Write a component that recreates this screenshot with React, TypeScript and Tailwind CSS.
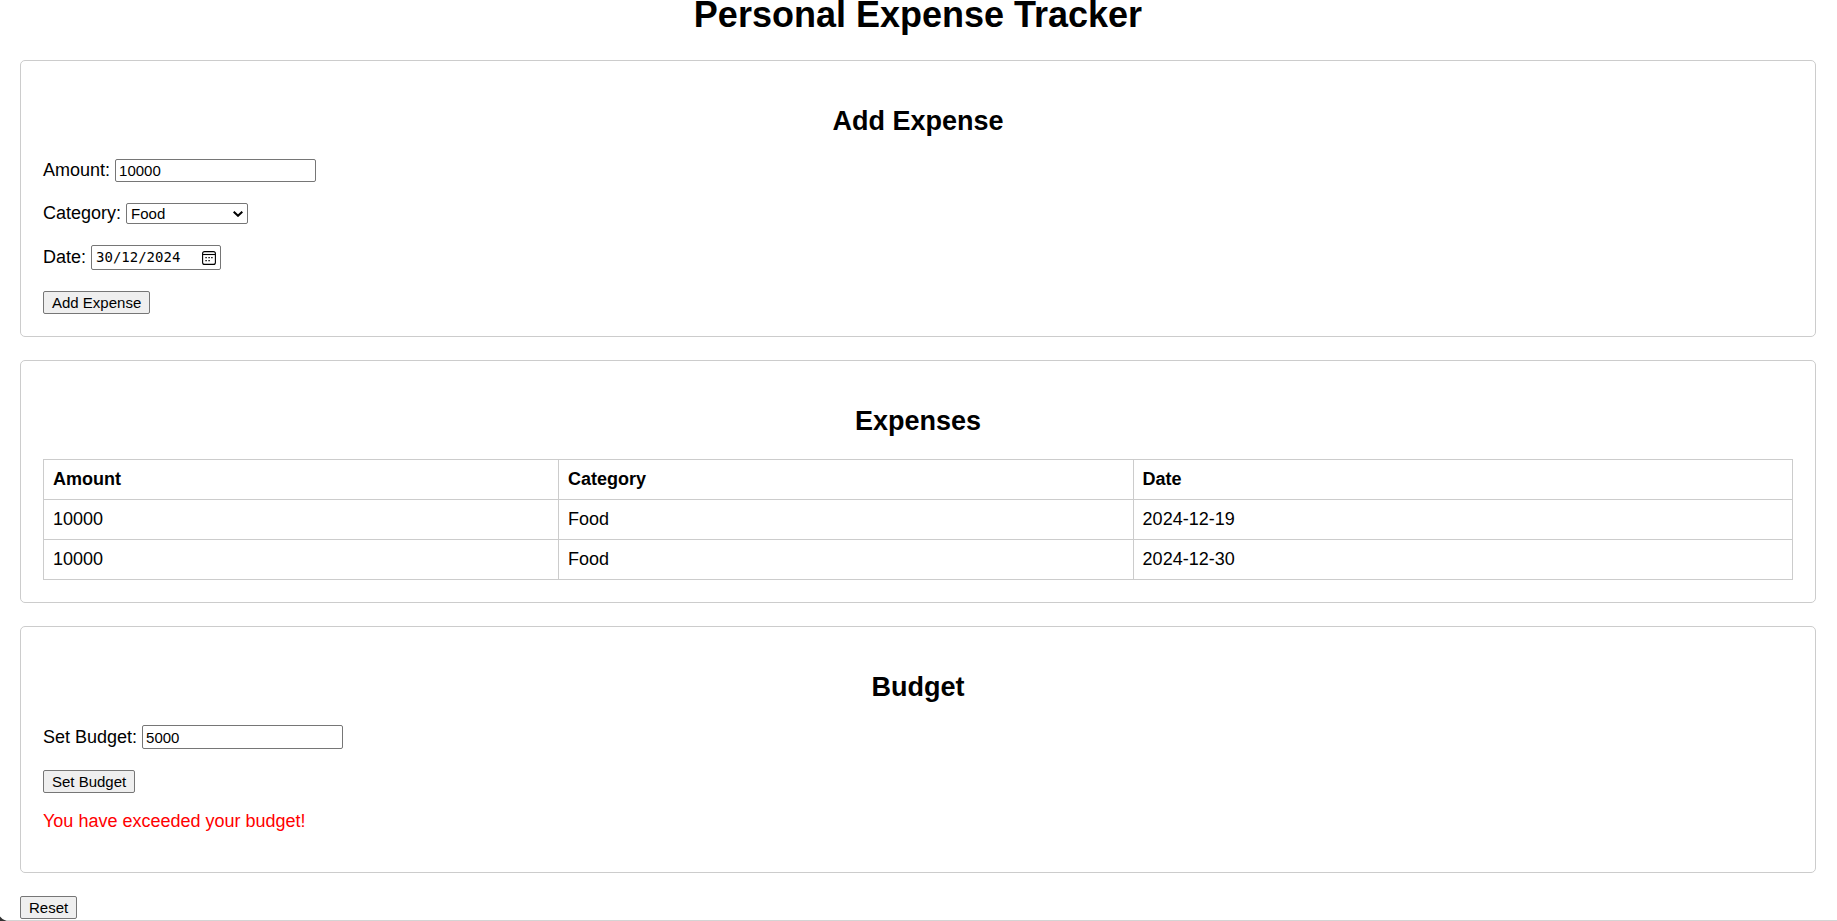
import { useState } from "react";
import type { ReactNode } from "react";

type Expense = { amount: string; category: string; date: string };

const initialExpenses: Expense[] = [
  { amount: "10000", category: "Food", date: "2024-12-19" },
  { amount: "10000", category: "Food", date: "2024-12-30" },
];

const categories = ["Food", "Transport", "Entertainment", "Other"];

const fieldClass =
  "rounded-[2px] border border-[#767676] bg-white px-[3px] text-[15px] leading-[17px] outline-none";
const buttonClass =
  "h-[23px] rounded-[2px] border border-[#767676] bg-[#efefef] px-2 text-[15px] leading-[17px]";
const cellClass = "h-10 border border-[#cccccc] px-[9px] text-left";

function Card({ title, children }: { title: string; children: ReactNode }) {
  return (
    <section className="mb-[23px] rounded-[5px] border border-[#cccccc] p-[22px]">
      <h2 className="py-[23px] text-center text-[27px] leading-[30px] font-bold">{title}</h2>
      {children}
    </section>
  );
}

function CalendarIcon() {
  return (
    <svg width="14" height="14" viewBox="0 0 14 14" fill="none" stroke="currentColor" aria-hidden="true">
      <rect x="0.6" y="0.6" width="12.8" height="12.8" rx="2" strokeWidth="1.1" />
      <path d="M1 3.5h12" strokeWidth="1.1" />
      <path
        d="M6.4 6.6h1.4M9.2 6.6h1.4M3.4 6.6h1.4M3.4 9.6h1.4M6.4 9.6h1.4"
        strokeWidth="1.4"
      />
    </svg>
  );
}

export default function App() {
  const [amount, setAmount] = useState("10000");
  const [category, setCategory] = useState("Food");
  const [date, setDate] = useState("30/12/2024");
  const [budget, setBudget] = useState("5000");
  const [limit, setLimit] = useState(5000);
  const [expenses, setExpenses] = useState(initialExpenses);

  const total = expenses.reduce((sum, e) => sum + Number(e.amount), 0);

  return (
    <div className="relative min-h-screen border-b border-[#d4d4d4] bg-white pr-[21px] pl-5 font-['Liberation_Sans',Arial,sans-serif] text-[18px] leading-[21px] text-black">
      <h1 className="pb-[30px] text-center text-[36px] leading-[30px] font-bold">Personal Expense Tracker</h1>

      <Card title="Add Expense">
        <form
          className="flex flex-col items-start gap-[21px]"
          onSubmit={(e) => {
            e.preventDefault();
            setExpenses([...expenses, { amount, category, date: date.split("/").reverse().join("-") }]);
          }}
        >
          <div className="flex items-center gap-[5px]">
            <label htmlFor="amount">Amount:</label>
            <input
              id="amount"
              className={`${fieldClass} h-[23px] w-[201px]`}
              value={amount}
              onChange={(e) => setAmount(e.target.value)}
            />
          </div>
          <div className="flex items-center gap-[5px]">
            <label htmlFor="category">Category:</label>
            <div className="grid items-center">
              <select
                id="category"
                className="col-start-1 row-start-1 h-[21px] w-[122px] appearance-none rounded-[2px] border border-[#767676] bg-white px-1 text-[15px] leading-[17px]"
                value={category}
                onChange={(e) => setCategory(e.target.value)}
              >
                {categories.map((c) => (
                  <option key={c}>{c}</option>
                ))}
              </select>
              <svg
                className="pointer-events-none col-start-1 row-start-1 mr-[5px] justify-self-end"
                width="10"
                height="6"
                viewBox="0 0 10 6"
                fill="none"
                stroke="currentColor"
                strokeWidth="2"
                aria-hidden="true"
              >
                <path d="M0.7 0.7 5 4.8 9.3 0.7" />
              </svg>
            </div>
          </div>
          <div className="flex items-center gap-[5px]">
            <label htmlFor="date">Date:</label>
            <div className="flex h-[25px] w-[130px] items-center justify-between rounded-[2px] border border-[#767676] px-1">
              <input
                id="date"
                className="w-[92px] font-['DejaVu_Sans_Mono',monospace] text-[14px] leading-[17px] outline-none"
                value={date}
                onChange={(e) => setDate(e.target.value)}
              />
              <button type="button" aria-label="Open calendar">
                <CalendarIcon />
              </button>
            </div>
          </div>
          <button type="submit" className={buttonClass}>
            Add Expense
          </button>
        </form>
      </Card>

      <Card title="Expenses">
        <table className="w-full border-collapse">
          <thead>
            <tr>
              <th className={`${cellClass} w-[29.45%]`}>Amount</th>
              <th className={`${cellClass} w-[32.85%]`}>Category</th>
              <th className={cellClass}>Date</th>
            </tr>
          </thead>
          <tbody>
            {expenses.map((e, i) => (
              <tr key={i}>
                <td className={cellClass}>{e.amount}</td>
                <td className={cellClass}>{e.category}</td>
                <td className={cellClass}>{e.date}</td>
              </tr>
            ))}
          </tbody>
        </table>
      </Card>

      <Card title="Budget">
        <form
          className="flex flex-col items-start gap-[21px]"
          onSubmit={(e) => {
            e.preventDefault();
            setLimit(Number(budget));
          }}
        >
          <div className="flex items-center gap-[5px]">
            <label htmlFor="budget">Set Budget:</label>
            <input
              id="budget"
              className={`${fieldClass} h-6 w-[201px]`}
              value={budget}
              onChange={(e) => setBudget(e.target.value)}
            />
          </div>
          <button type="submit" className={buttonClass}>
            Set Budget
          </button>
        </form>
        <p className="min-h-[57px] pt-[18px] text-[#ff0000]">
          {total > limit ? "You have exceeded your budget!" : ""}
        </p>
      </Card>

      <button type="button" className={buttonClass} onClick={() => setExpenses([])}>
        Reset
      </button>

      {/* Rounded window corner */}
      <svg className="absolute -bottom-px left-0" width="7" height="5" viewBox="0 0 7 5" aria-hidden="true">
        <path d="M0 0.5Q2 3.5 6.5 5H0Z" fill="#333333" />
      </svg>
    </div>
  );
}
